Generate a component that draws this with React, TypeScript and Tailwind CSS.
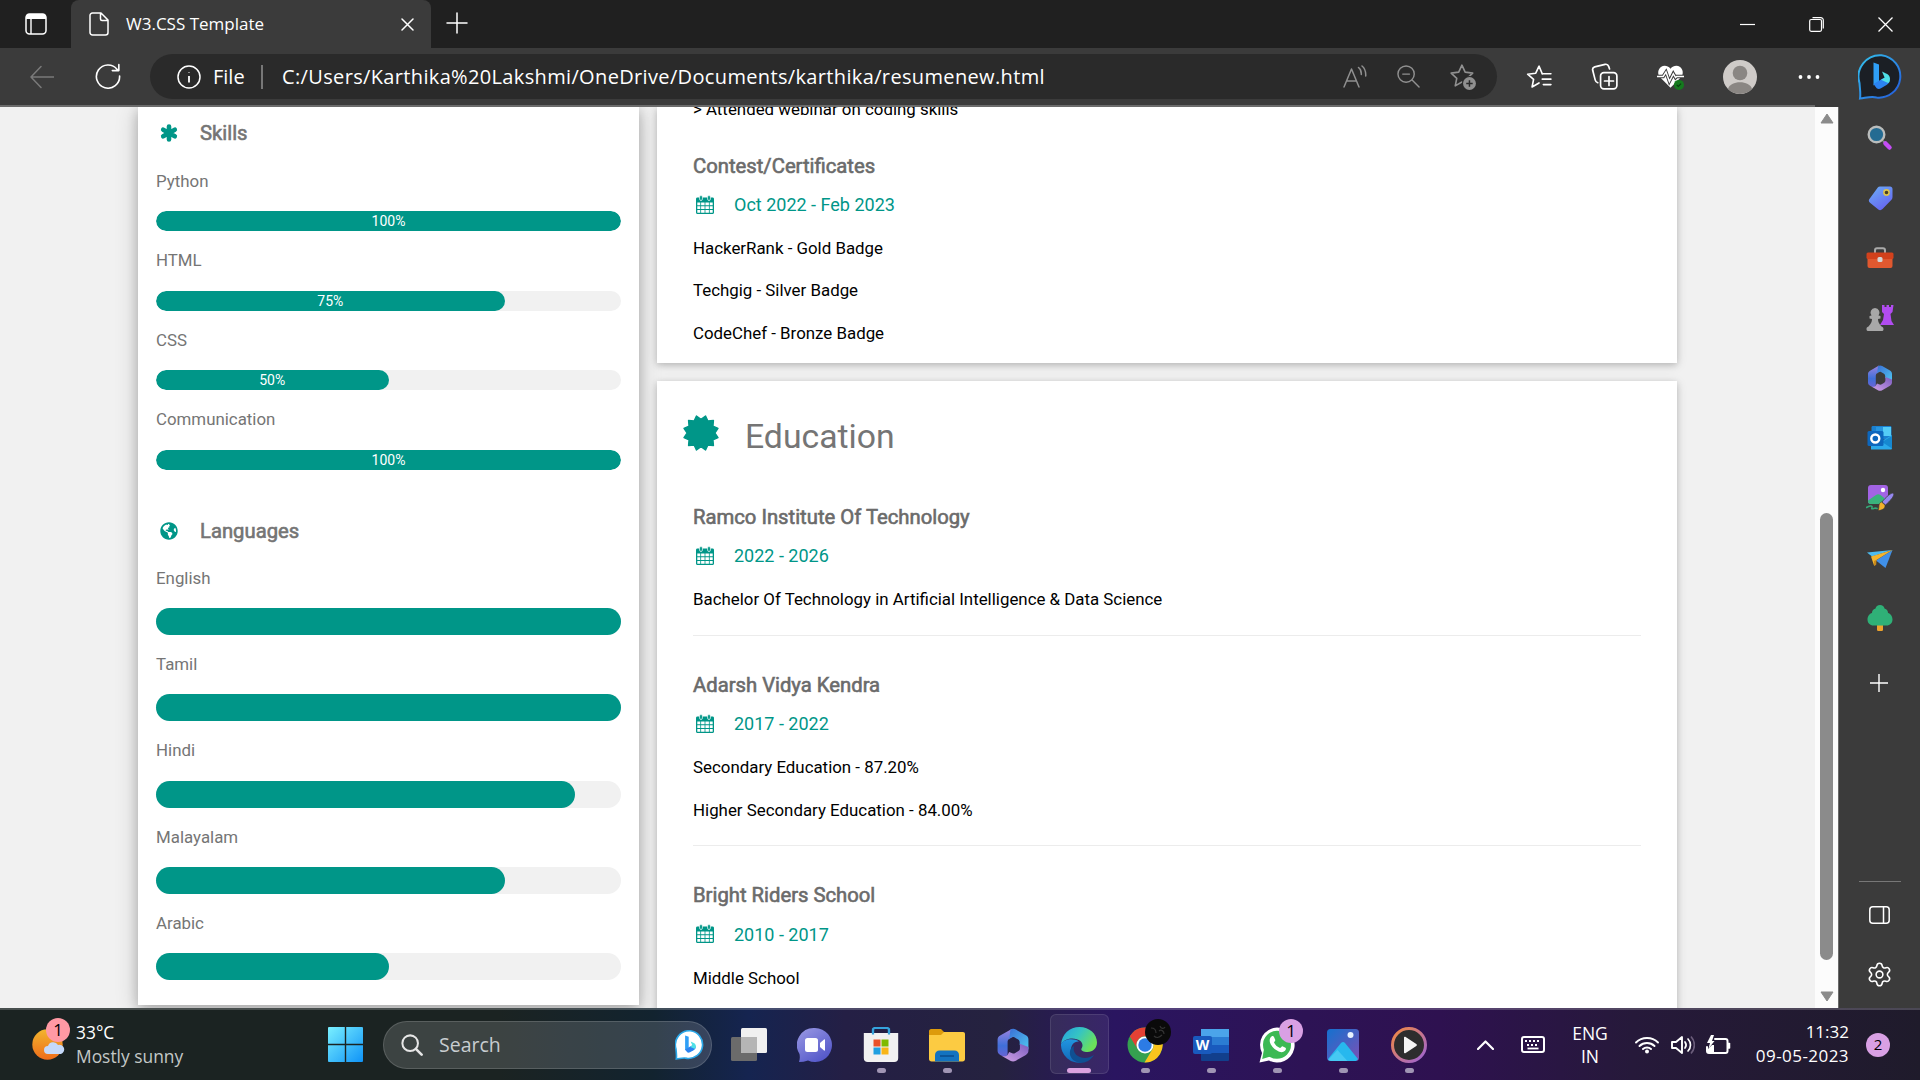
import React from "react";
import { FaGlobeAmericas } from "react-icons/fa";
import { Settings } from "lucide-react";

type P = { w: number; h?: number; vb?: string; children: React.ReactNode; className?: string };
const S = ({ w, h, vb, children, className }: P) => (
  <svg width={w} height={h ?? w} viewBox={vb ?? "0 0 24 24"} fill="none" className={"shrink-0 " + (className ?? "")}>
    {children}
  </svg>
);

const line = { stroke: "currentColor", strokeWidth: 1.5, strokeLinecap: "round" as const, strokeLinejoin: "round" as const };

const Calendar = () => (
  <S w={18} h={19} vb="0 0 18 19" className="text-[#009688]">
    <path d="M0 4C0 3 .6 2.500 1.500 2.500h15c.9 0 1.500.5 1.500 1.500v13.500c0 .9-.6 1.500-1.500 1.500h-15C.6 19 0 18.400 0 17.500z" fill="currentColor" />
    <path d="M1.300 7.500h3v2.800h-3zM5.100 7.500h3.500v2.800H5.100zM9.400 7.500h3.500v2.800H9.400zM13.700 7.500h3v2.800h-3zM1.300 11.200h3V14h-3zM5.100 11.200h3.500V14H5.100zM9.400 11.200h3.500V14H9.400zM13.700 11.200h3V14h-3zM1.300 14.900h3v2.800h-3zM5.100 14.900h3.500v2.800H5.100zM9.400 14.900h3.500v2.800H9.400zM13.700 14.900h3v2.800h-3z" fill="#fff" />
    <rect x="3.600" y=".5" width="2.800" height="5" rx="1.400" fill="currentColor" stroke="#fff" strokeWidth=".7" />
    <rect x="11.600" y=".5" width="2.800" height="5" rx="1.400" fill="currentColor" stroke="#fff" strokeWidth=".7" />
  </S>
);

const Asterisk = () => (
  <S w={18} vb="0 0 18 18">
    <path d="M9 2.500v13M3.200 5.700l11.600 6.600M14.800 5.700L3.200 12.300" stroke="currentColor" strokeWidth="4.600" strokeLinecap="round" />
  </S>
);

const burst = Array.from({ length: 24 }, (_, i) => {
  const a = ((i * 15 + 15) * Math.PI) / 180;
  const r = i % 2 === 0 ? 17.6 : 13.8;
  return `${18 + r * Math.sin(a)},${18 - r * Math.cos(a)}`;
}).join(" ");

const Certificate = () => (
  <S w={36} vb="0 0 36 36">
    <polygon points={burst} fill="#009688" stroke="#009688" strokeWidth="1.400" strokeLinejoin="round" />
  </S>
);

const Copilot365 = ({ w, h, id }: { w: number; h: number; id: string }) => (
  <S w={w} h={h} vb="0 0 28 28">
    <defs>
      <linearGradient id={id + "a"} x1="0" y1="0" x2="0" y2="1"><stop stopColor="#9b83e0" /><stop offset=".6" stopColor="#3f6fd8" /><stop offset="1" stopColor="#6a63d4" /></linearGradient>
      <linearGradient id={id + "b"} x1="0" y1="0" x2="1" y2="1"><stop stopColor="#3a6fd6" /><stop offset="1" stopColor="#4fc6f0" /></linearGradient>
      <linearGradient id={id + "c"} x1="1" y1="0" x2="0" y2="1"><stop stopColor="#7a5cc0" /><stop offset="1" stopColor="#d3a3e6" /></linearGradient>
    </defs>
    <path d="M13 1.500L4 6.700C2.700 7.500 2 8.500 2 10v8.500c0 1.500.8 2.500 2 3.200l3 1.500c2 .5 2.800-.8 2.800-2.700V11.500c0-1 .4-1.700 1.200-2.200L14 7.500z" fill={`url(#${id}a)`} />
    <path d="M12 2c1.400-.8 2.800-.8 4.200 0L24 6.500c1.400.8 2 1.900 2 3.500V17.500l-6.800-3.500v-2c0-1-.4-1.700-1.200-2.200l-3-1.800c-1.500-.6-3.500.2-4 2z" fill={`url(#${id}b)`} />
    <path d="M26 15.500v2.800c0 1.600-.7 2.700-2 3.400l-7.800 4.500c-1.400.8-2.900.8-4.300 0L5 22.300c2.300 1 4 .6 5-1l1-1.800 2.500 1c1 .3 1.500.1 2.200-.3l2.500-1.500c.8-.5 1.200-1.200 1.200-2.200V13z" fill={`url(#${id}c)`} />
  </S>
);

const BingMark = () => (
  <>
    <path d="M15.500 8.500l5.500 2v17l-5.500 4z" fill="#2f9ff6" />
    <path d="M15.500 30l11-6.500 5 .5c.7 3-.5 5.500-3 7l-5.500 3.300c-1.500.8-3 .8-4.300 0z" fill="#2b83f0" />
    <path d="M24 17.500l2.700 6.300-3.700 2 6 2.700c2 1 2.500-.5 2.700-1.500.9-3.500-.2-6-3.700-7.500z" fill="#4fe0e6" />
  </>
);

const BingBubble = () => (
  <S w={46} h={46} vb="0 0 46 46">
    <defs><linearGradient id="bb" x1="0" y1="0" x2="1" y2="1"><stop stopColor="#34c3ec" /><stop offset="1" stopColor="#2358dc" /></linearGradient></defs>
    <path d="M23.500 1.200a21 21 0 1 1-5 42.300c-5-1.500-10 .2-16.500 1 .8-5 0-8-.5-15.500A21.500 21.500 0 0 1 23.500 1.200z" fill="#1b1f25" stroke="url(#bb)" strokeWidth="2" />
    <BingMark />
  </S>
);

const SearchSide = () => (
  <S w={28} vb="0 0 28 28">
    <path d="M17 17l3 3" stroke="#888" strokeWidth="2" />
    <path d="M19.500 19.500l4 4" stroke="#c44cf5" strokeWidth="4.500" strokeLinecap="round" />
    <circle cx="10.500" cy="10.500" r="7.800" fill="#246b92" stroke="#b9bcbc" strokeWidth="2.400" />
  </S>
);
const Tag = () => (
  <S w={28} vb="0 0 28 28">
    <defs><linearGradient id="tg" x1="0" y1="0" x2=".6" y2="1"><stop stopColor="#6cb0f5" /><stop offset="1" stopColor="#6666f2" /></linearGradient></defs>
    <path d="M14 2.500h10c1.500 0 2.500 1 2.500 2.500v8c0 1-.3 2-1 2.700l-9 9.300c-1.500 1.500-3 1.500-4.500.2l-8-6.500c-1.500-1.200-1.500-3-.2-4.200l8-11C12.300 2.800 13 2.500 14 2.500z" fill="url(#tg)" />
    <circle cx="20.500" cy="8.500" r="2.600" fill="#473f22" stroke="#ddc34a" strokeWidth="1.600" />
  </S>
);
const Toolbox = () => (
  <S w={28} vb="0 0 28 28">
    <path d="M9 9V6.500C9 5 10 4.300 11 4.300h6c1.200 0 2 .7 2 2.200V9" stroke="#aaa" strokeWidth="2" />
    <rect x="1.500" y="12" width="25" height="12" rx="2" fill="#e0582f" />
    <rect x=".5" y="8.500" width="27" height="6.500" rx="1.500" fill="#d2411c" />
    <rect x="11.500" y="13" width="5" height="5" rx="1.500" fill="#d4d4d4" />
  </S>
);
const Games = () => (
  <S w={28} vb="0 0 28 28">
    <path d="M16 1h2.500v2h2V1h2.500v2h2V1h2.500l-1 7-2 2 1 7 2.500 4H14l3-5 1-6-2-2z" fill="#b14cf0" />
    <path d="M9 4a4.600 4.600 0 0 1 3.500 7.500l2 .5v2.500l-2.500.5c0 3 1 4.500 3.500 7.500 1.500.5 2 1.500 2 2.500 0 1.500-.5 2-2 2H2.500c-1.500 0-2-.5-2-2s.5-2 2-2.500C5 19.500 6 18 6 15l-2.500-.5V12l2-.5A4.600 4.600 0 0 1 9 4z" fill="#a8a8a8" />
  </S>
);
const Outlook = () => (
  <S w={28} vb="0 0 28 28">
    <path d="M7 2h17c1 0 1.500.5 1.500 1.500v12h-20V3.500C5.500 2.500 6 2 7 2z" fill="#1a80d0" />
    <path d="M10 3h7v9h-7z" fill="#2896e0" /><path d="M17 3h8v9h-8z" fill="#54ccf7" />
    <path d="M5 25.500V14l11 3 10-6v13c0 1-.5 1.500-1.500 1.500z" fill="#2ba9ea" />
    <path d="M26 12v12.500L16 18z" fill="#1688d0" />
    <rect x="1.500" y="7" width="16" height="15" rx="1.500" fill="#0d67bd" />
    <circle cx="9.300" cy="14.500" r="4" stroke="#fff" strokeWidth="2.400" />
  </S>
);
const Paint = () => (
  <S w={28} vb="0 0 28 28">
    <rect x="2" y="1" width="20" height="19" rx="3" fill="#a263e4" />
    <path d="M2 16.500l8-5.500c1.500-1 3-1 4.500 0l5 4-4.500 5H4.500C3 20 2 19 2 17.500z" fill="#3ab27c" />
    <circle cx="17" cy="6" r="2.200" fill="#fff" />
    <path d="M27.500 9.500c1.700 2.200-4 8-8 11.500L16 18c3.500-4.500 10-10.500 11.500-8.500z" fill="#9587ef" stroke="#3b3b3b" strokeWidth=".8" />
    <path d="M15.500 18l3.500 3c.5 3.500-3 5.500-7 5.500 1-2 .8-3 1-5 .2-1.800 1-3 2.500-3.500z" fill="#f2b02c" stroke="#3b3b3b" strokeWidth=".6" />
    <path d="M.5 23.500c3-1.800 5-1.800 5.500-.8s-1.500 2.500 1 2 2.500-1 4-.2" stroke="#35a875" strokeWidth="1.600" strokeLinecap="round" />
  </S>
);
const Plane = () => (
  <S w={28} vb="0 0 28 28">
    <path d="M1 8.500L26.500 6 6 12.500z" fill="#4cbcf0" />
    <path d="M10 16.500L26.500 6 19.500 24z" fill="#4090e8" />
    <path d="M5 12.500L26.500 6 10.500 16l-2.300 6z" fill="#f4b42c" />
    <path d="M8 17l2.500-1.200-.3 5L8.200 22z" fill="#c98a1b" />
  </S>
);
const Tree = () => (
  <S w={28} vb="0 0 28 28">
    <rect x="11" y="20" width="6" height="7" rx="1.200" fill="#eea32c" />
    <path d="M14 1c2.500 0 4 1.500 4.500 3.500C21 5 22 7 22 9c2.500.5 4.500 3.500 4.500 6.500 0 3.500-2.500 6-6 6h-13c-3.500 0-6-2.500-6-6C1.500 12.500 3.500 9.500 6 9c0-2 1-4 3.500-4.500C10 2.500 11.500 1 14 1z" fill="#2fb077" />
  </S>
);

const sideApps = [
  <SearchSide />, <Tag />, <Toolbox />, <Games />, <Copilot365 w={28} h={28} id="s" />, <Outlook />, <Paint />, <Plane />, <Tree />,
];

const TitleBar = () => (
  <div className="flex h-12 items-center bg-[#202020] text-white">
    <div className="flex h-12 w-[71px] items-center pl-[25px]">
      <S w={22} vb="0 0 22 22">
        <rect x="1" y="1" width="20" height="20" rx="3.500" stroke="#fff" strokeWidth="1.500" />
        <path d="M1 6V4a3 3 0 0 1 3-3h14a3 3 0 0 1 3 3v2z" fill="#fff" />
        <path d="M6 6v15" stroke="#fff" strokeWidth="1.400" />
      </S>
    </div>
    <div className="flex h-12 w-[360px] items-center rounded-t-lg bg-[#3b3b3b] pl-[18px]">
      <S w={20} h={24} vb="0 0 20 24">
        <path d="M3.500 1H12l7 7v12.500a2.500 2.500 0 0 1-2.500 2.500h-13A2.500 2.500 0 0 1 1 20.500v-17A2.500 2.500 0 0 1 3.500 1zM11.500 1v6A1.500 1.500 0 0 0 13 8.500h6" {...line} />
      </S>
      <span className="ml-[17px] w-[275px] whitespace-nowrap text-[17px]">W3.CSS Template</span>
      <S w={13} vb="0 0 13 13"><path d="M1 1l11 11M12 1L1 12" {...line} /></S>
    </div>
    <S w={22} vb="0 0 22 22" className="-mt-[2px] ml-[15px]"><path d="M11 1v20M1 11h20" {...line} /></S>
    <div className="ml-auto flex items-center gap-[54px] pr-[27px]">
      <S w={15} vb="0 0 15 15"><path d="M0 7.500h15" stroke="#fff" strokeWidth="1.200" /></S>
      <S w={15} vb="0 0 15 15">
        <rect x=".7" y="2.500" width="11.800" height="11.800" rx="1.500" stroke="#fff" strokeWidth="1.200" />
        <path d="M3.500.7h8.300a2.500 2.500 0 0 1 2.500 2.500V11.500" stroke="#fff" strokeWidth="1.200" />
      </S>
      <S w={15} vb="0 0 15 15"><path d="M.5.5l14 14M14.500.5l-14 14" stroke="#fff" strokeWidth="1.300" /></S>
    </div>
  </div>
);

const starPath = "M12 2l3 6.500 7 .9-5.200 4.800 1.400 7L12 17.700l-6.200 3.500 1.400-7L2 9.400l7-.9z";

const Toolbar = () => (
  <div className="flex h-[57px] items-center bg-[#3b3b3b] text-white">
    <S w={24} className="ml-[30px] text-[#7a7a7a]"><path d="M11 1.500L1 12l10 10.500M1 12h23" {...line} /></S>
    <S w={26} className="-mt-[2px] ml-[41px]"><path d="M20.500 6A10.700 10.700 0 1 0 22.700 12M22 1.500V7h-6" {...line} /></S>
    <div className="ml-[29px] flex h-[45px] w-[1347px] items-center rounded-full bg-[#2a2a2a] pl-[27px]">
      <S w={24}><circle cx="12" cy="12" r="11" {...line} /><path d="M12 11v6.500M12 7v.5" stroke="#fff" strokeWidth="1.800" /></S>
      <span className="ml-3 w-[48px] text-[20px]">File</span>
      <div className="h-6 w-[2px] bg-[#777]" />
      <span className="ml-[19px] w-[1061px] whitespace-nowrap text-[20px] tracking-[0.350px]">C:/Users/Karthika%20Lakshmi/OneDrive/Documents/karthika/resumenew.html</span>
      <S w={24} className="text-[#909090]"><path d="M1 22L8.500 4 16 22M4 16h9M15.500 2.500c2 1.500 3 4 2.800 7M19 1c3 2.500 4 6 3.700 10" {...line} /></S>
      <S w={23} className="ml-[30px] text-[#909090]"><circle cx="9.500" cy="9.500" r="8.500" {...line} /><path d="M16 16l7 7M6 9.500h7" {...line} /></S>
      <S w={28} h={28} vb="0 0 26 26" className="ml-[29px] text-[#909090]">
        <path d={starPath} {...line} /><circle cx="19" cy="19" r="7" fill="#2a2a2a" /><circle cx="19" cy="19" r="6" fill="#909090" /><path d="M19 16v6M16 19h6" stroke="#2a2a2a" strokeWidth="1.400" />
      </S>
    </div>
    <S w={26} className="ml-[29px]"><path d="M15 9l-3-7-3 6.500-7.500.9L7 14.200l-1.400 7L12 17.500" {...line} /><path d="M15 9h8M15 14h8M16 19h7" {...line} /></S>
    <S w={27} className="ml-[39px]"><rect x="8.500" y="8.500" width="14.500" height="14.500" rx="3" {...line} /><path d="M16 12v8M12 16h8M6 17.500C4.500 17 4 16.300 3.700 15L1.500 6.500C1.200 5 2 3.800 3.300 3.400L12.500 1.200c1.500-.3 2.700.4 3.200 1.800l.8 2.300" {...line} /></S>
    <S w={27} className="ml-[39px]">
      <path d="M12 22L2.500 12.500C.3 10 .7 5.500 3.500 3.500c2.700-1.800 6-1.300 8.500 1.500 2.500-2.800 5.800-3.300 8.500-1.500 2.800 2 3.200 6.500 1 9z" fill="#fff" />
      <path d="M0 12h5.500L8 8l3 8.500 3.500-7 2 3.500 1-1H24" stroke="#3b3b3b" strokeWidth="3" /><path d="M0 12h5.500L8 8l3 8.500 3.500-7 2 3.500 1-1H24" stroke="#fff" strokeWidth="1.300" /><circle cx="19.500" cy="19.500" r="4.500" fill="#157a1e" /><path d="M17.500 19.500l1.400 1.400 2.500-2.600" stroke="#0b3f10" />
    </S>
    <S w={34} vb="0 0 34 34" className="ml-[39px]">
      <circle cx="17" cy="17" r="17" fill="#cfcbc8" /><circle cx="17" cy="13" r="7.300" fill="#8a8683" /><path d="M5 29c2-9 22-9 24 0-6 6.500-18 6.500-24 0z" fill="#8a8683" />
    </S>
    <S w={22} vb="0 0 22 22" className="ml-[41px]"><circle cx="2.500" cy="11" r="1.900" fill="#fff" /><circle cx="11" cy="11" r="1.900" fill="#fff" /><circle cx="19.500" cy="11" r="1.900" fill="#fff" /></S>
    <div className="ml-[38px]"><BingBubble /></div>
  </div>
);

const SectionHead = ({ icon, children }: { icon: React.ReactNode; children: string }) => (
  <div className="flex h-[30.400px] items-center text-[20.250px] text-[#757575]">
    <span className="mr-[18px] flex w-[26px] justify-center text-[#009688]">{icon}</span>
    <span className="[-webkit-text-stroke:0.600px_currentcolor]">{children}</span>
  </div>
);

const skills = [["Python", 100], ["HTML", 75], ["CSS", 50], ["Communication", 100]] as const;
const langs = [["English", 100], ["Tamil", 100], ["Hindi", 90], ["Malayalam", 75], ["Arabic", 50]] as const;

const LeftCard = () => (
  <div className="h-[898px] w-[501px] bg-white px-[18px] pt-[11px] text-[16.875px] text-[#757575] shadow-[0_4px_11px_rgba(0,0,0,0.2),0_4px_22px_rgba(0,0,0,0.19)]">
    <SectionHead icon={<Asterisk />}>Skills</SectionHead>
    <div className="mt-[20.250px] flex flex-col gap-[17px]">
      {skills.map(([n, v]) => (
        <div key={n}>
          <div className="mb-[17px] h-[25.500px] leading-[25.500px]">{n}</div>
          <div className="h-[20px] overflow-hidden rounded-full bg-[#f1f1f1]">
            <div className="h-full rounded-full bg-[#009688] text-center text-[14px] leading-[21px] text-white" style={{ width: v + "%" }}>{v}%</div>
          </div>
        </div>
      ))}
    </div>
    <div className="h-[46px]" />
    <SectionHead icon={<FaGlobeAmericas size={18} />}>Languages</SectionHead>
    <div className="mt-[20px] flex flex-col gap-[17px]">
      {langs.map(([n, v]) => (
        <div key={n}>
          <div className="mb-[17px] h-[25.200px] leading-[25.200px]">{n}</div>
          <div className="h-[27px] rounded-full bg-[#f1f1f1]">
            <div className="h-full rounded-full bg-[#009688]" style={{ width: v + "%" }} />
          </div>
        </div>
      ))}
    </div>
  </div>
);

const Entry = ({ title, date, lines }: { title: string; date: string; lines: string[] }) => (
  <div>
    <div className="h-[30.400px] text-[20.250px] leading-[30.400px] text-[#6b6b6b] [-webkit-text-stroke:0.600px_currentcolor]">{title}</div>
    <div className="mt-[10px] flex h-[27px] items-center text-[18px] text-[#009688]">
      <span className="-mt-px mr-[18px] flex w-[23px] justify-center"><Calendar /></span>{date}
    </div>
    <div className="mt-[18px] flex flex-col gap-[16.900px] text-[16.875px] leading-[25.300px] text-black">
      {lines.map((l) => <div key={l}>{l}</div>)}
    </div>
  </div>
);

const cardShadow = "shadow-[0_2px_6px_rgba(0,0,0,0.16),0_2px_11px_rgba(0,0,0,0.12)]";

const RightColumn = () => (
  <div className="w-[1020px]">
    <div className={"h-[256px] bg-white px-9 " + cardShadow}>
      <div className="h-[43.800px] overflow-hidden">
        <div className="-mt-[10px] text-[16.875px] leading-[25.300px] text-black">&gt; Attended webinar on coding skills</div>
      </div>
      <Entry title="Contest/Certificates" date="Oct 2022 - Feb 2023" lines={["HackerRank - Gold Badge", "Techgig - Silver Badge", "CodeChef - Bronze Badge"]} />
    </div>
    <div className={"mt-[18px] h-[660px] bg-white px-9 pt-[31px] " + cardShadow}>
      <div className="-ml-[10px] flex h-[51px] items-center text-[33.750px] text-[#757575]">
        <span className="mr-[26px] -mt-[9px]"><Certificate /></span>Education
      </div>
      <div className="h-[39px]" />
      <Entry title="Ramco Institute Of Technology" date="2022 - 2026" lines={["Bachelor Of Technology in Artificial Intelligence & Data Science"]} />
      <div className="mb-[33.800px] mt-[22.500px] h-px bg-[#ececec]" />
      <Entry title="Adarsh Vidya Kendra" date="2017 - 2022" lines={["Secondary Education - 87.20%", "Higher Secondary Education - 84.00%"]} />
      <div className="mb-[33.800px] mt-[22.500px] h-px bg-[#ececec]" />
      <Entry title="Bright Riders School" date="2010 - 2017" lines={["Middle School"]} />
    </div>
  </div>
);

const SideBar = () => (
  <div className="-mt-[2px] flex h-[903px] w-[81px] flex-col items-center bg-[#3b3b3b] pt-[2px] text-white">
    {sideApps.map((a, i) => <div key={i} className="flex h-[60.100px] items-center pt-px">{a}</div>)}
    <S w={18} vb="0 0 18 18" className="mr-[2px] mt-[26px]"><path d="M9 0v18M0 9h18" stroke="#fff" strokeWidth="1.400" /></S>
    <div className="mt-auto h-px w-[42px] bg-[#777]" />
    <S w={21} h={18} vb="0 0 21 18" className="mt-[24px]"><rect x=".8" y=".8" width="19.400" height="16.400" rx="3" {...line} /><path d="M14.500 1v16" {...line} /></S>
    <Settings size={27} strokeWidth={1.400} className="mb-[20px] mt-[37px]" />
  </div>
);

const ScrollBar = () => (
  <div className="flex w-[24px] flex-col items-center border-r border-[#6a6a6a] bg-[#fcfcfc] py-[6px]">
    <S w={14} h={11} vb="0 0 14 11"><path d="M7 1l6 9H1z" fill="#8b8b8b" stroke="#8b8b8b" strokeLinejoin="round" /></S>
    <div className="mt-[389px] h-[447px] w-[13px] rounded-full bg-[#8b8b8b]" />
    <S w={14} h={11} vb="0 0 14 11" className="mt-auto"><path d="M7 10l6-9H1z" fill="#8b8b8b" stroke="#8b8b8b" strokeLinejoin="round" /></S>
  </div>
);

const TaskView = () => (
  <S w={36} vb="0 0 36 36"><rect x="0" y="10" width="26" height="24" rx="1.500" fill="#6b6b6b" /><rect x="10" y="1" width="26" height="25" rx="1.500" fill="#f0f0f0" /><path d="M10 10h16v16H11.500a1.500 1.500 0 0 1-1.500-1.500z" fill="#b5b5b5" /></S>
);
const Chat = () => (
  <S w={36} vb="0 0 36 36">
    <defs><linearGradient id="ct" x1="0" y1="0" x2=".7" y2="1"><stop stopColor="#9b9ae4" /><stop offset="1" stopColor="#5357c9" /></linearGradient></defs>
    <path d="M18 1a17 17 0 1 1-7 32.500c-3 1-6 1.500-9 1.500 1-3 1-5 .5-8A17 17 0 0 1 18 1z" fill="url(#ct)" /><rect x="8" y="11" width="13" height="14" rx="2.500" fill="#fff" /><path d="M23 16l4-3.500c.6-.4 1 0 1 .6v9.800c0 .6-.4 1-1 .6L23 20z" fill="#fff" />
  </S>
);
const Store = () => (
  <S w={36} vb="0 0 36 36"><path d="M10 8V3c0-1.200.8-2 2-2h12c1.200 0 2 .8 2 2v5" stroke="#35a3dc" strokeWidth="2.200" /><path d="M.8 6h34.400v25a4 4 0 0 1-4 4H4.800a4 4 0 0 1-4-4z" fill="#f1f1f1" /><path d="M10 1.500V7.500M26 1.500V7.500" stroke="#35a3dc" strokeWidth="2.200" /><path d="M10.500 12.500h7v7h-7z" fill="#e8512a" /><path d="M18.500 12.500h7v7h-7z" fill="#7fba00" /><path d="M10.500 20.500h7v7h-7z" fill="#1f9fe0" /><path d="M18.500 20.500h7v7h-7z" fill="#f8b517" /></S>
);
const Explorer = () => (
  <S w={36} vb="0 0 36 36"><path d="M2 2h10l4 4v6H0V4c0-1 1-2 2-2z" fill="#dd9b0c" /><path d="M0 8h12l3-3h19c1.200 0 2 .8 2 2v25c0 1.500-1 2.500-2.500 2.500h-31C1 34.500 0 33.500 0 32z" fill="#fccb42" /><path d="M6 34.500V28c0-3 2-4.500 4.500-4.500h15c2.500 0 4.500 1.500 4.500 4.500v6.500z" fill="#1373c0" /><path d="M11 29h14" stroke="#0b4f90" strokeWidth="1.600" /></S>
);
const Edge = () => (
  <S w={36} vb="0 0 36 36">
    <defs>
      <linearGradient id="eg" x1="0" y1="0" x2="1" y2=".5"><stop stopColor="#259fe0" /><stop offset=".5" stopColor="#35c4c4" /><stop offset="1" stopColor="#6be05a" /></linearGradient>
      <linearGradient id="eb" x1="0" y1="0" x2="0" y2="1"><stop stopColor="#2196e0" /><stop offset="1" stopColor="#1268b8" /></linearGradient>
    </defs>
    <path d="M0 17C1 7 8.500 0 18.500 0 28.500 0 36 7 36 15.500c0 5.500-4 9.500-9.500 9.500-4 0-7-1.500-6-3.500 1.500-2 1.500-5-1-7.500C15 10.500 5 10 0 17z" fill="url(#eg)" />
    <path d="M0 17c3-6 14-6 18-2.500-5-.5-8 4-8 8 0 6 4 11.500 11 13A18 18 0 0 1 0 17z" fill="url(#eb)" />
    <path d="M13 19c-2 7 4 12 11 12 3 0 6-1 9-3-3 5-8 8-14 8-7-1.500-11-6-10-12 .3-2 2-4 4-5z" fill="#0f4f92" />
  </S>
);
const Chrome = () => (
  <S w={36} vb="0 0 36 36"><circle cx="18" cy="18" r="17.500" fill="#35a150" /><path d="M2.800 9.300A17.500 17.500 0 0 1 33.200 9.300H18a8.700 8.700 0 0 0-8 12z" fill="#e44134" /><path d="M33.200 9.300A17.500 17.500 0 0 1 17.500 35.500L25.600 22c1.700-3.200 1.700-9-3.600-12.700z" fill="#f9c41d" /><circle cx="18" cy="18" r="8.500" fill="#fff" /><circle cx="18" cy="18" r="6.700" fill="#2c7be5" /></S>
);
const Word = () => (
  <div className="relative flex">
    <S w={36} vb="0 0 36 36"><path d="M8 2h28v8H8z" fill="#4ba4ea" /><path d="M8 10h28v8H8z" fill="#2b7cd3" /><path d="M8 18h28v8H8z" fill="#195abe" /><path d="M8 26h28v7a1 1 0 0 1-1 1H9a1 1 0 0 1-1-1z" fill="#123f8c" /><rect x="0" y="9" width="19" height="18" rx="2" fill="#195abd" /></S>
    <span className="absolute left-0 top-[9px] w-[19px] text-center text-[14px] font-bold leading-[18px] text-white">W</span>
  </div>
);
const Photos = () => (
  <S w={36} vb="0 0 36 36">
    <defs><linearGradient id="ph" x1="0" y1="0" x2="1" y2="1"><stop stopColor="#1471cf" /><stop offset="1" stopColor="#7b50b5" /></linearGradient></defs>
    <rect x="2" y="2" width="32" height="32" rx="3.500" fill="url(#ph)" /><path d="M3 32l13-16c1.400-1.500 2.800-1.500 4 0l13 16c-1 1.500-2 2-3 2H6c-1.500 0-2.500-.8-3-2z" fill="#27b8ee" /><path d="M3 33l9.500-10 10 11H6z" fill="#65daf8" opacity=".5" /><circle cx="25.500" cy="8" r="3" fill="#e8f2ff" />
  </S>
);
const Media = () => (
  <S w={36} vb="0 0 36 36">
    <defs><linearGradient id="md" x1="0" y1="0" x2="1" y2="1"><stop stopColor="#f48a3e" /><stop offset="1" stopColor="#9a62d8" /></linearGradient></defs>
    <circle cx="18" cy="18" r="16.500" fill="#2d2d2d" stroke="url(#md)" strokeWidth="3" /><path d="M13 10.500c0-.8.600-1 1.300-.7l11 7.300c.8.500.8 1.300 0 1.800l-11 7.300c-.7.400-1.300 0-1.300-.7z" fill="#f4f4f4" />
  </S>
);
const ChromeBadged = () => (
  <div className="relative flex"><Chrome />
    <S w={26} vb="0 0 26 26" className="absolute -top-[8px] left-[18px]"><circle cx="13" cy="13" r="13" fill="#0a0a0a" /><path d="M6 9c3 0 5 2 5 5M9 17c2 2 5 2 8-1M15 7c1 3 4 3 5 1M14 12c2-2 5 0 5 3" stroke="#333" strokeWidth="1.200" /></S>
  </div>
);
const WhatsappBadged = () => (
  <div className="relative flex">
    <S w={36} vb="0 0 36 36"><path d="M18 .5A17.500 17.500 0 1 1 10 33.500L.5 35.500 3 26A17.500 17.500 0 0 1 18 .5z" fill="#fff" /><circle cx="18" cy="17.800" r="14" fill="#3cb954" /><path d="M5 22l-1.800 10L13 29z" fill="#3cb954" /><path d="M12.500 9.500c1-.8 2-.5 2.500.5l1.300 3c.2.700-1.300 2-1.300 2.500 1.300 2.700 3.500 4.500 6 5.500.7 0 1.700-2 2.500-1.800l3 1.600c.8.500.5 2-.5 3-2 2-5 1.700-8-.2-3.500-2-6-5-7-8.100-.7-2.300-.2-4.600 1.500-6z" fill="#fff" /></S>
    <span className="absolute -top-[8px] left-[20px] flex size-6 items-center justify-center rounded-full bg-[#d9a0e4] text-[17px] text-black">1</span>
  </div>
);

const apps: { n: string; icon: React.ReactNode; run: boolean }[] = [
  { n: "task", icon: <TaskView />, run: false },
  { n: "chat", icon: <Chat />, run: false },
  { n: "store", icon: <Store />, run: true },
  { n: "files", icon: <Explorer />, run: true },
  { n: "m365", icon: <Copilot365 w={36} h={38} id="t" />, run: false },
  { n: "edge", icon: <Edge />, run: true },
  { n: "chrome", icon: <ChromeBadged />, run: true },
  { n: "word", icon: <Word />, run: true },
  { n: "whatsapp", icon: <WhatsappBadged />, run: true },
  { n: "photos", icon: <Photos />, run: true },
  { n: "media", icon: <Media />, run: true },
];

const TaskBar = () => (
  <div className="flex h-[72px] items-center border-t-2 border-white/20 bg-[linear-gradient(90deg,#1b2322_0%,#1b2322_26%,#12232f_34%,#152450_39%,#241f45_44%,#25223f_52%,#2a1560_58%,#2d1355_68%,#2e1150_75%,#26193a_85%,#1f1b2b_100%)] bg-origin-border pb-px text-white">
    <div className="relative ml-[32px] mr-[9px] flex w-[35px]">
      <S w={35} h={32} vb="0 0 35 32">
        <defs><linearGradient id="sn" x1="0" y1="0" x2="0" y2="1"><stop stopColor="#f2b52e" /><stop offset="1" stopColor="#ee6c1a" /></linearGradient></defs>
        <circle cx="15.500" cy="15.500" r="15.200" fill="url(#sn)" /><path d="M16 25a4 4 0 0 1 0-8 5.500 5.500 0 0 1 10-1 4.700 4.700 0 0 1 3 9z" fill="#c5d9fa" />
      </S>
      <span className="absolute -top-[11px] left-[14px] flex size-6 items-center justify-center rounded-full bg-[#ff99a4] text-[17px] text-black">1</span>
    </div>
    <div className="-mt-[2px] w-[252px] text-[17.400px] leading-[24px]"><div>33°C</div><div className="text-[#c3c8c7]">Mostly sunny</div></div>
    <S w={35} vb="0 0 35 35">
      <defs><linearGradient id="wn" x1="0" y1="0" x2="1" y2="1"><stop stopColor="#7af0ff" /><stop offset="1" stopColor="#0f93f7" /></linearGradient></defs>
      <path d="M1 0h15.800v16.800H0V1a1 1 0 0 1 1-1zM18.200 0H34a1 1 0 0 1 1 1v15.800H18.200zM0 18.200h16.800V35H1a1 1 0 0 1-1-1zM18.200 18.200H35V34a1 1 0 0 1-1 1H18.200z" fill="url(#wn)" />
    </S>
    <div className="ml-5 flex h-12 w-[329px] items-center rounded-full border border-white/15 bg-white/15 pl-[17px]">
      <S w={22}><circle cx="10" cy="10" r="8.500" stroke="#e6e6e6" strokeWidth="2.200" /><path d="M16.500 16.500l6 6" stroke="#e6e6e6" strokeWidth="2.800" strokeLinecap="round" /></S>
      <span className="ml-[16px] w-[236px] text-[19.500px] text-[#c8cdd0]">Search</span>
      <S w={30} vb="0 0 46 46">
        <path d="M23.500 1.200a21 21 0 1 1-5 42.300c-5-1.500-10 .2-16.500 1 .8-5 0-8-.5-15.500A21.500 21.500 0 0 1 23.500 1.200z" fill="#fff" stroke="#2aa7e8" strokeWidth="2.500" />
        <BingMark />
      </S>
    </div>
    <div className="-mt-px ml-[4px] flex">
      {apps.map((a) => (
        <div key={a.n} className="flex w-[66px] justify-center">
          <div className={"flex h-[60px] w-[59px] flex-col items-center justify-between rounded-md pt-[12px] " + (a.n === "edge" ? "border border-white/10 bg-white/[0.07]" : "border border-transparent")}>
            <div className="flex h-9 items-center">{a.icon}</div>
            <div className={"h-[5px] rounded-full " + (a.n === "edge" ? "w-6 bg-[#dba1e0]" : a.run ? "w-[9px] bg-[#a095b4]" : "w-0")} />
          </div>
        </div>
      ))}
    </div>
    <S w={17} h={10} vb="0 0 17 10" className="ml-[35px]"><path d="M1 9l7.500-7.500L16 9" {...line} strokeWidth={2.200} /></S>
    <S w={24} h={17} vb="0 0 24 17" className="ml-[27px]"><rect x="1" y="1" width="22" height="15" rx="2" {...line} strokeWidth={2} /><path d="M4 5h16M6 9h12" stroke="#fff" strokeWidth="1.800" strokeDasharray="2 2" /><path d="M6.500 12.500h11" stroke="#fff" strokeWidth="1.800" /></S>
    <div className="ml-[20px] w-[50px] text-center text-[17.500px] leading-[23px]"><div>ENG</div><div>IN</div></div>
    <S w={24} h={18} vb="0 0 24 18" className="ml-[20px]"><path d="M1 6.500c6-6 16-6 22 0M4.500 10c4-4 11-4 15 0M8 13c2.200-2 5.800-2 8 0" {...line} strokeWidth={1.900} /><circle cx="12" cy="15.500" r="2" fill="#fff" /></S>
    <S w={24} h={20} vb="0 0 24 20" className="ml-[12px]"><path d="M1 7h4l6-5v16l-6-5H1z" {...line} strokeWidth={1.900} /><path d="M14 7c1.500 2 1.500 4 0 6M17 4c3.300 3.500 3.300 8.500 0 12" {...line} strokeWidth={1.700} /><path d="M20 1.500c4.500 5 4.500 12 0 17" stroke="#6b5d7b" strokeWidth="1.600" /></S>
    <S w={25} h={20} vb="0 0 25 20" className="ml-[11px]"><path d="M9 4h10.500a2 2 0 0 1 2 2v10a2 2 0 0 1-2 2H3a2 2 0 0 1-2-2v-4" {...line} strokeWidth={2} /><path d="M22 8.500h1.500V13H22z" {...line} /><path d="M5 0L1 8h3l-1.500 5.500L8.500 6H6l2-6zM2 14l4-4h2v7H2z" fill="#fff" /></S>
    <div className="-mt-[2px] ml-auto mr-[17px] text-right text-[17px] leading-[24px]"><div>11:32</div><div className="tracking-[0.450px]">09-05-2023</div></div>
    <span className="mr-[30px] flex size-6 items-center justify-center rounded-full bg-[#d9a0e4] text-[15px] text-black">2</span>
  </div>
);

export default function App() {
  return (
    <div className="h-[1080px] w-[1920px] overflow-hidden bg-[#3b3b3b] font-['Open_Sans',sans-serif]">
      <TitleBar />
      <Toolbar />
      <div className="flex h-[903px] pt-[2px]">
        <div className="-mt-[2px] flex h-[903px] w-[1815px] overflow-hidden border-t-2 border-[#6b6b6b] bg-[#f1f1f1] pl-[138px] font-['Roboto',sans-serif]">
          <LeftCard />
          <div className="ml-[18px]"><RightColumn /></div>
        </div>
        <ScrollBar />
        <SideBar />
      </div>
      <TaskBar />
    </div>
  );
}
